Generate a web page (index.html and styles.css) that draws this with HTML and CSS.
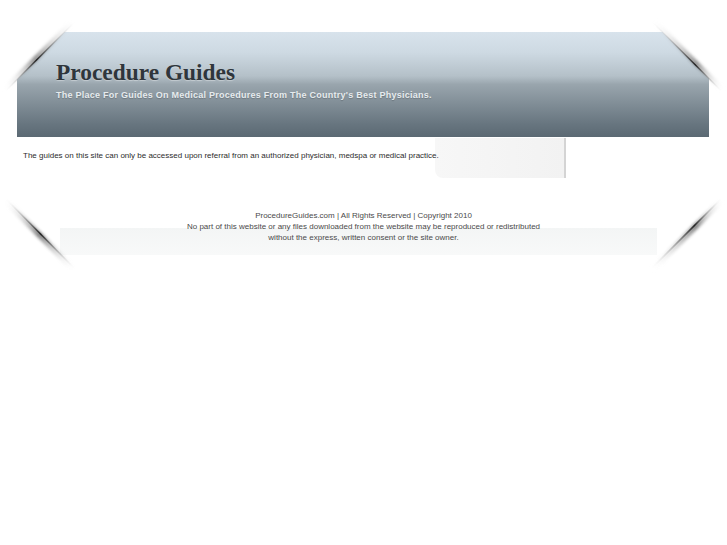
FILE: index.html
```html
<!DOCTYPE html>
<html>
<head>
<meta charset="utf-8">
<title>Procedure Guides</title>
<link rel="stylesheet" href="styles.css">
</head>
<body>
<div class="page">
  <header class="masthead">
    <h1 class="title">Procedure Guides</h1>
    <p class="tagline">The Place For Guides On Medical Procedures From The Country's Best Physicians.</p>
  </header>
  <main class="content">
    <p class="notice">The guides on this site can only be accessed upon referral from an authorized physician, medspa or medical practice.</p>
  </main>
  <footer class="footer">
    <p>ProcedureGuides.com | All Rights Reserved | Copyright 2010</p>
    <p>No part of this website or any files downloaded from the website may be reproduced or redistributed</p>
    <p>without the express, written consent or the site owner.</p>
  </footer>

  <svg class="corner corner-tl" width="90" height="90" viewBox="0 0 90 90">
    <defs>
      <linearGradient id="gtl" gradientUnits="userSpaceOnUse" x1="76" y1="5" x2="4" y2="77">
        <stop offset="0" stop-color="#fff" stop-opacity="0"/>
        <stop offset="0.55" stop-color="#222"/>
        <stop offset="1" stop-color="#fff" stop-opacity="0"/>
      </linearGradient>
      <filter id="blur1" x="-20%" y="-20%" width="140%" height="140%"><feGaussianBlur stdDeviation="1.6"/></filter>
    </defs>
    <polygon points="8,17 64.5,17 8,73.5" fill="#fff"/>
    <line x1="74" y1="5" x2="2" y2="77" stroke="url(#gtl)" stroke-width="5" filter="url(#blur1)" opacity="0.5"/>
    <line x1="76.5" y1="5" x2="4.5" y2="77" stroke="url(#gtl)" stroke-width="1.6"/>
  </svg>

  <svg class="corner corner-tr" width="90" height="90" viewBox="0 0 90 90">
    <defs>
      <linearGradient id="gtr" gradientUnits="userSpaceOnUse" x1="10" y1="5" x2="82" y2="77">
        <stop offset="0" stop-color="#fff" stop-opacity="0"/>
        <stop offset="0.62" stop-color="#222"/>
        <stop offset="1" stop-color="#fff" stop-opacity="0"/>
      </linearGradient>
      <filter id="blur2" x="-20%" y="-20%" width="140%" height="140%"><feGaussianBlur stdDeviation="1.6"/></filter>
    </defs>
    <polygon points="21.5,17 69,17 69,64.5" fill="#fff"/>
    <line x1="12" y1="5" x2="84" y2="77" stroke="url(#gtr)" stroke-width="5" filter="url(#blur2)" opacity="0.5"/>
    <line x1="9.5" y1="5" x2="81.5" y2="77" stroke="url(#gtr)" stroke-width="1.6"/>
  </svg>

  <svg class="corner corner-bl" width="90" height="90" viewBox="0 0 90 90">
    <defs>
      <linearGradient id="gbl" gradientUnits="userSpaceOnUse" x1="5" y1="8" x2="76" y2="80">
        <stop offset="0" stop-color="#fff" stop-opacity="0"/>
        <stop offset="0.5" stop-color="#222"/>
        <stop offset="1" stop-color="#fff" stop-opacity="0"/>
      </linearGradient>
      <filter id="blur3" x="-20%" y="-20%" width="140%" height="140%"><feGaussianBlur stdDeviation="1.8"/></filter>
    </defs>
    <line x1="5" y1="10" x2="76" y2="82" stroke="url(#gbl)" stroke-width="6" filter="url(#blur3)" opacity="0.55"/>
    <line x1="5" y1="8" x2="76" y2="80" stroke="url(#gbl)" stroke-width="1.6"/>
  </svg>

  <svg class="corner corner-br" width="90" height="90" viewBox="0 0 90 90">
    <defs>
      <linearGradient id="gbr" gradientUnits="userSpaceOnUse" x1="82" y1="8" x2="10" y2="80">
        <stop offset="0" stop-color="#fff" stop-opacity="0"/>
        <stop offset="0.38" stop-color="#222"/>
        <stop offset="1" stop-color="#fff" stop-opacity="0"/>
      </linearGradient>
      <filter id="blur4" x="-20%" y="-20%" width="140%" height="140%"><feGaussianBlur stdDeviation="1.8"/></filter>
    </defs>
    <line x1="82" y1="10" x2="10" y2="82" stroke="url(#gbr)" stroke-width="6" filter="url(#blur4)" opacity="0.55"/>
    <line x1="82" y1="8" x2="10" y2="80" stroke="url(#gbr)" stroke-width="1.6"/>
  </svg>
</div>
</body>
</html>
```

FILE: styles.css
```css
html, body {
  margin: 0;
  padding: 0;
  background: #fff;
}

.page {
  position: relative;
  width: 727px;
  min-height: 545px;
  padding-top: 32px;
  box-sizing: border-box;
}

.masthead {
  margin-left: 17px;
  width: 692px;
  height: 105px;
  box-sizing: border-box;
  padding: 28px 0 0 39px;
  background: linear-gradient(to bottom,
    #d8e3ec 0%,
    #cdd9e2 20%,
    #b4c0c8 42%,
    #99a5ad 50%,
    #818e97 68%,
    #67757f 88%,
    #5b6973 100%);
}

.title {
  margin: 0;
  font-family: "Liberation Serif", "Times New Roman", serif;
  font-weight: bold;
  font-size: 23.4px;
  line-height: 25px;
  color: #2f363c;
  text-shadow: 0 1px 1px rgba(255, 255, 255, 0.35);
}

.tagline {
  margin: 5px 0 0;
  font-family: "Liberation Sans", Arial, sans-serif;
  font-weight: bold;
  font-size: 9px;
  line-height: 11px;
  letter-spacing: 0.25px;
  color: #e6ebee;
  text-shadow: 0 1px 1px rgba(0, 0, 0, 0.2);
}

.content {
  position: relative;
  height: 41px;
  box-sizing: border-box;
  padding: 13px 0 0 23px;
}

.content::before {
  content: "";
  position: absolute;
  left: 435px;
  top: 1px;
  width: 129px;
  height: 40px;
  background: linear-gradient(to right, #f7f7f7, #f2f2f2);
  border-right: 2px solid #d4d4d4;
  border-bottom-left-radius: 8px;
}

.notice {
  position: relative;
  margin: 0;
  font-family: "Liberation Sans", Arial, sans-serif;
  font-size: 8px;
  line-height: 11px;
  color: #2c2c2c;
}

.footer {
  position: relative;
  margin-top: 32px;
  padding-bottom: 14px;
  text-align: center;
}

.footer::before {
  content: "";
  position: absolute;
  left: 60px;
  right: 70px;
  top: 18px;
  height: 27px;
  background: linear-gradient(to bottom, #f3f5f5, #f8f9f9);
}

.footer p {
  position: relative;
  margin: 0;
  font-family: "Liberation Sans", Arial, sans-serif;
  font-size: 8px;
  line-height: 11px;
  color: #4a4a4a;
}

.corner {
  position: absolute;
  display: block;
}

.corner-tl { left: 0; top: 15px; }
.corner-tr { left: 641px; top: 15px; }
.corner-bl { left: 0; top: 190px; }
.corner-br { left: 640px; top: 190px; }
```
